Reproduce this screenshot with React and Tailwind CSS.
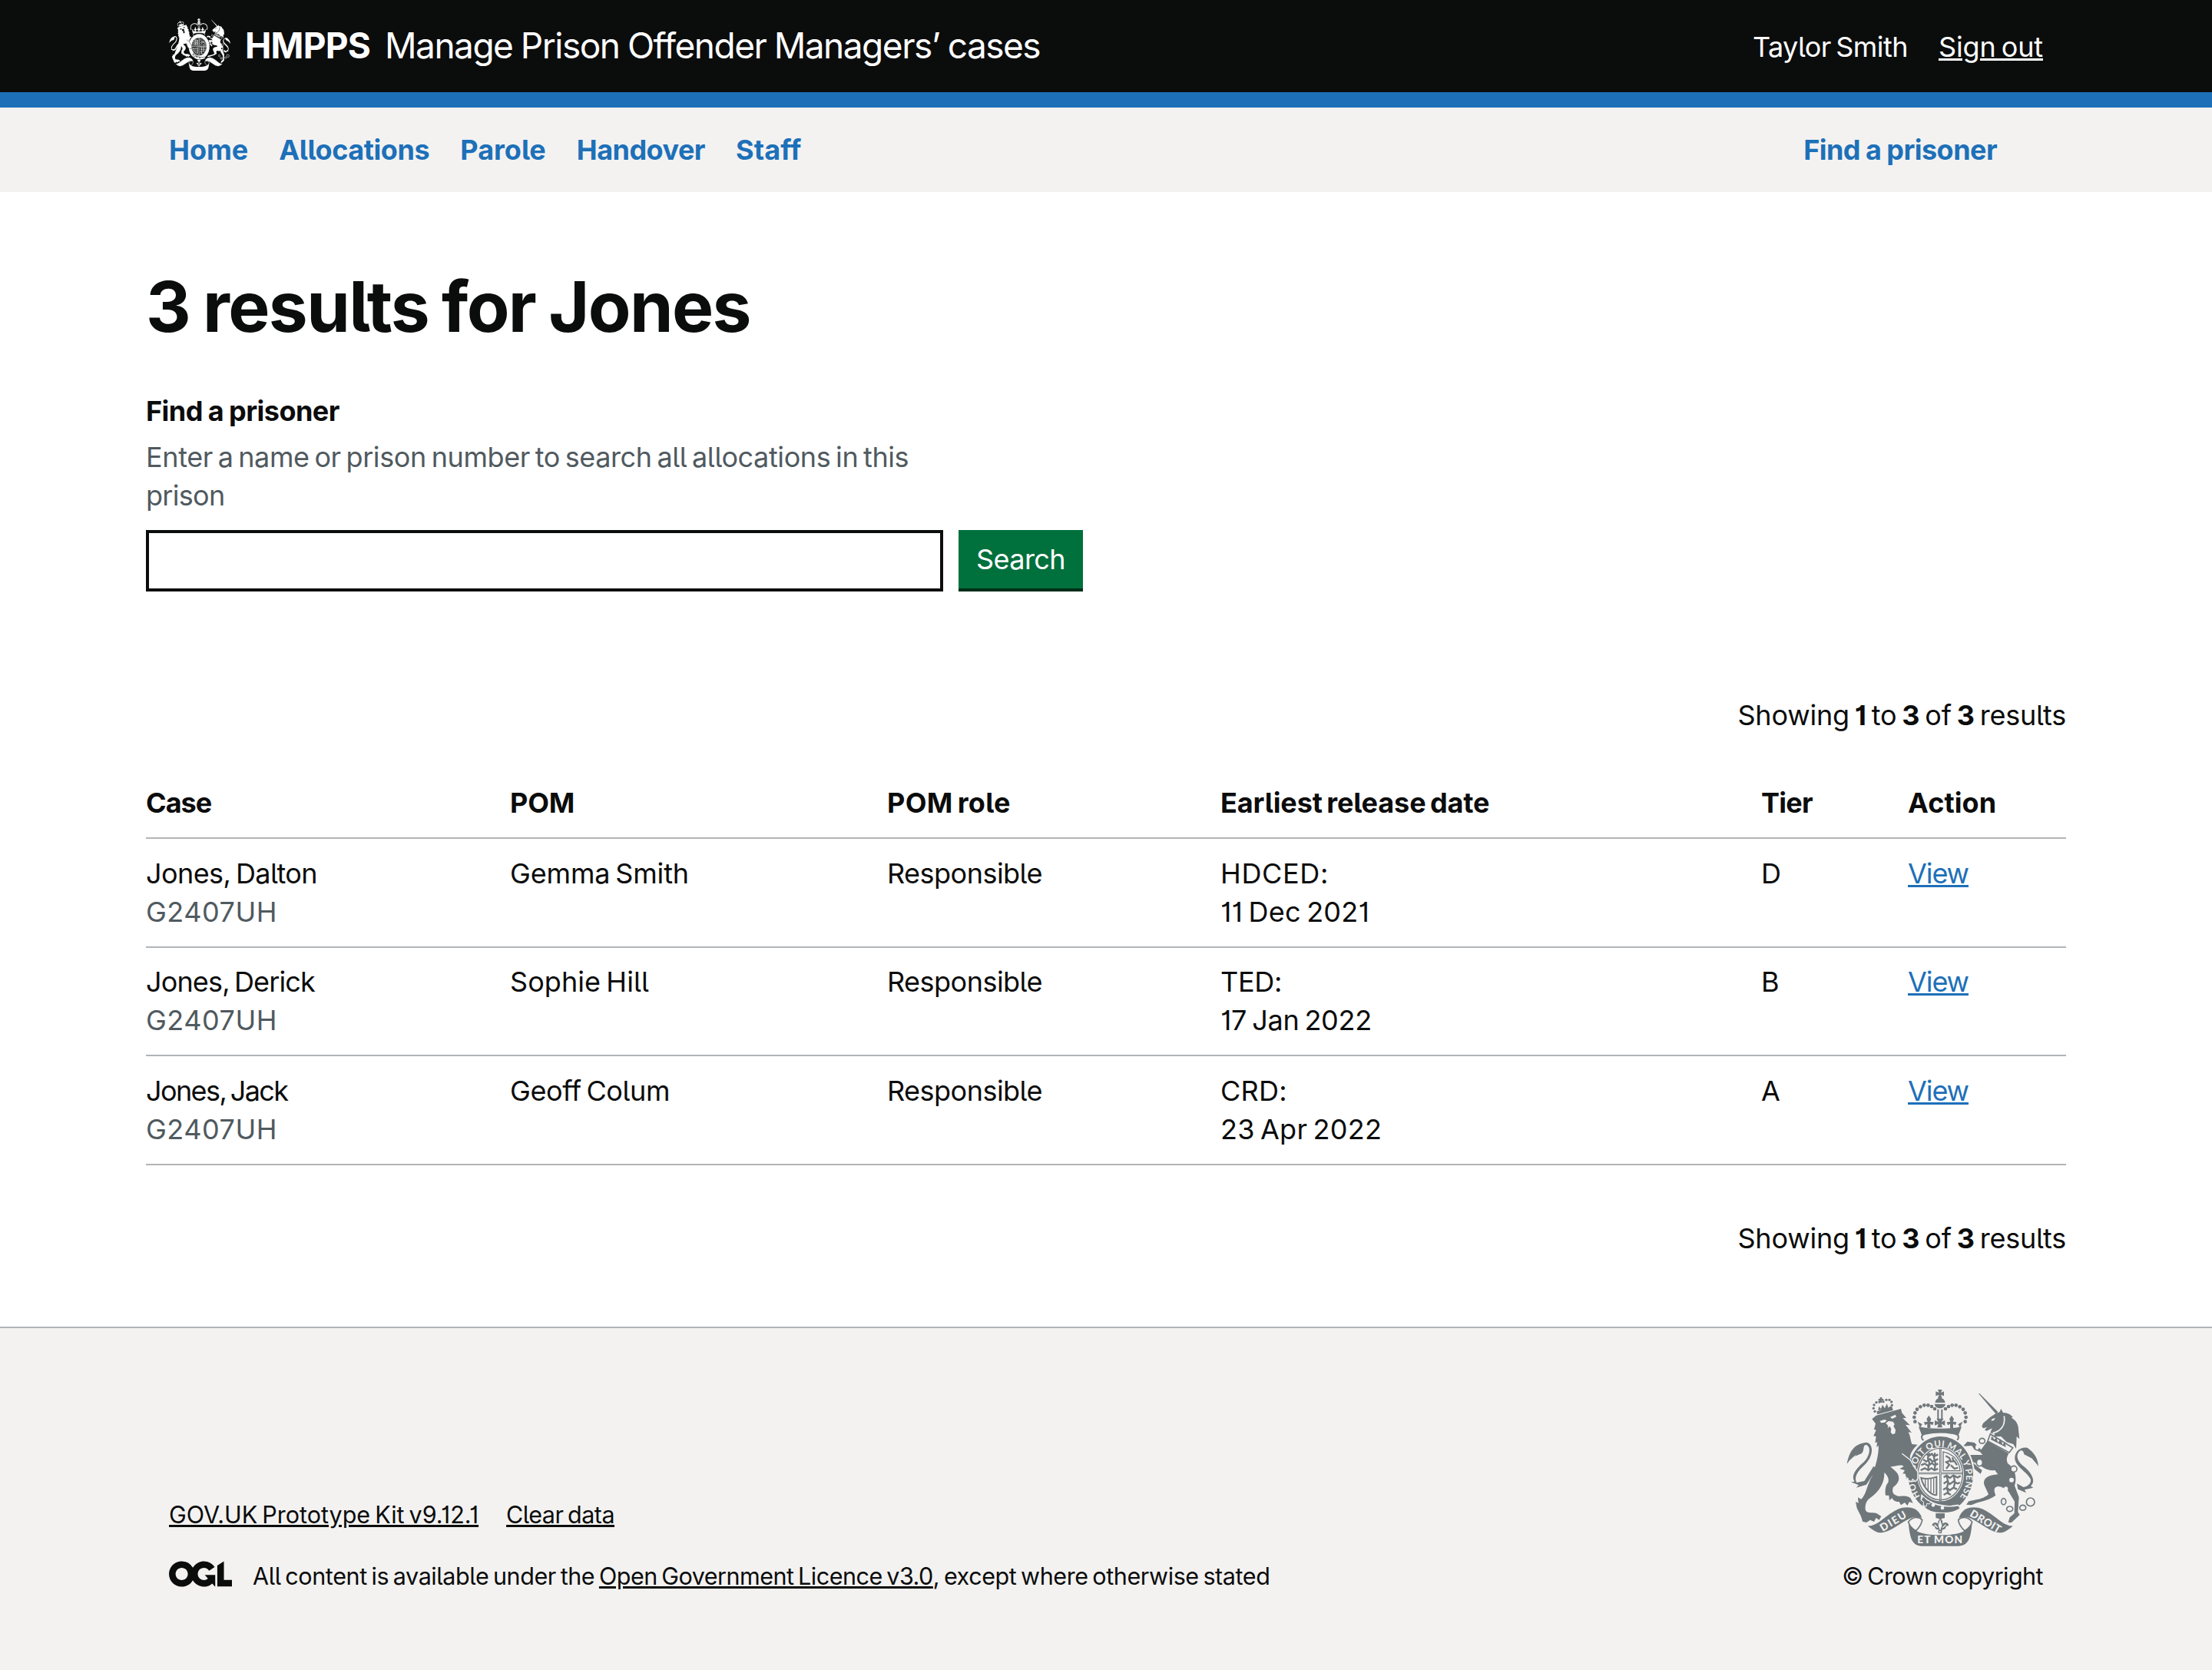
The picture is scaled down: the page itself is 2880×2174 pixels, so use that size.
import React from "react";

const crownDots = [
  [340, 182], [337, 165], [340, 148], [348, 134], [361, 124], [376, 118], [391, 118], [405, 123], [417, 132],
  [536, 182], [539, 165], [536, 148], [528, 134], [515, 124], [500, 118], [485, 118], [471, 123], [459, 132],
];
const lionDots = [[183, 142], [178, 130], [180, 117], [189, 107], [201, 105], [216, 104], [228, 97], [240, 97], [248, 105], [250, 118], [247, 128]];

function RoyalArms({ className, ink, paper, motto }) {
  return (
    <svg className={className} viewBox="72 57 750 612" preserveAspectRatio="none" fill={ink} aria-hidden="true">
      {/* lion */}
      {lionDots.map(([x, y]) => <circle key={x + "-" + y} cx={x} cy={y} r="5" />)}
      <path d="M203 87h8v6h6v7h-6v8h-8v-8h-6v-7h6zM190 142l60-15 5 10-62 17zM196 138l3-16 8 10 6-16 9 14 8-18 6 16 8-8 1 12z" />
      <path d="M172 172L188 158 285 132 289 148 306 168 292 168 320 196 303 194 327 226 314 222C322 238 322 255 328 270L350 272C335 285 324 300 320 320 338 340 350 365 345 395L342 412 330 404 325 415 316 400 305 405 308 386 292 385 300 372 280 366 296 357C285 346 262 358 244 358L264 376C285 395 280 422 255 438 250 452 252 462 262 468 280 480 300 465 322 480L332 500 318 495 310 510 300 498 285 508 278 495C262 495 255 490 250 480L240 490 238 470 225 470C222 450 225 430 235 420 240 405 232 392 220 380 222 420 200 455 165 480 150 490 145 505 146 525 150 542 170 535 190 540L208 552 200 566 188 558 180 573 165 566 150 576 135 572C130 545 115 530 112 515L108 495 119 500 117 478 130 485C150 465 152 430 172 395 187 350 197 320 198 275L190 283 192 262 184 265 188 240 178 238 188 215 180 212 186 190Z" />
      <path fill={paper} d="M202 180l18-6 10 3-8 8-14 2zM243 164l20-9 4 8-16 8zM226 188l10-8 18 2 6 10-4 8 8 14-2 14-9 4-8-8 2-14-6-10-8 8 2-10z" />
      <path d="M74 347C84 296 104 268 150 263 180 268 178 316 146 348 118 374 100 396 112 420L142 414 178 356 190 366 150 428 110 440 120 430 90 418 104 416C88 392 112 364 140 340 164 316 170 278 148 272 134 276 144 292 132 306L104 318 112 308 84 334Z" />
      {/* unicorn */}
      <path d="M588 72l4 0 72 72-8 8z" />
      <path d="M601 200L606 188 634 164 656 150 670 145 676 132 684 147C704 148 715 155 722 165L716 167C735 175 745 195 744 214L748 250 737 240 735 288 724 270 698 262 676 240 648 240 652 230 634 226 641 208 620 218 612 214 622 204 606 208Z" />
      <path d="M688 160C694 195 676 220 644 226" stroke={paper} strokeWidth="5" fill="none" />
      <path fill={paper} d="M640 172l14-4-6 9-10 2z" />
      <path d="M634 230L722 284 708 303 624 258Z" fill={paper} stroke={ink} strokeWidth="5" />
      <path d="M636 252l4-14 10 14 8-8 6 20 10-14 8 22 9-12 4 22z" />
      <path d="M622 258L706 306C698 322 696 330 702 345 735 368 738 405 729 432L746 478 742 535 749 546 734 560 716 577 704 575 710 556 728 540 729 494 706 456C690 440 668 430 657 437 646 443 650 455 655 470 620 495 590 492 560 508L540 506 550 493 572 488C600 485 618 475 627 466L610 428C604 402 628 390 664 388L652 372C625 375 605 362 588 348L562 338 584 358 602 372 596 386 574 368 546 340 552 312 604 312 594 300 572 292 562 276 528 278 544 260 572 264 598 292Z" />
      <path d="M822 357C820 320 800 300 780 285 752 278 728 300 730 328 734 360 780 380 792 408 794 425 780 434 764 438L738 424 742 446 774 460 768 448 802 440 792 434C816 412 790 376 764 356 738 336 732 310 750 296 758 292 764 296 766 310L798 326 790 318 816 348Z" />
      <g fill="none" stroke={ink} strokeWidth="5">
        <ellipse cx="602" cy="257" rx="11" ry="10" fill={paper} />
        <ellipse cx="592" cy="342" rx="12" ry="14" fill={paper} />
        <ellipse cx="726" cy="367" rx="12" ry="12" fill={paper} />
        <ellipse cx="686" cy="494" rx="9" ry="12" />
        <ellipse cx="710" cy="523" rx="12" ry="10" />
        <ellipse cx="761" cy="518" rx="12" ry="10" />
        <circle cx="791" cy="496" r="16" />
      </g>
      <g fill={paper}>
        <ellipse cx="717" cy="410" rx="9" ry="9" />
        <ellipse cx="695" cy="446" rx="8" ry="10" />
        <ellipse cx="583" cy="282" rx="7" ry="9" />
      </g>
      {/* imperial crown */}
      {crownDots.map(([x, y]) => <circle key={x + "-" + y} cx={x} cy={y} r="7" />)}
      <path d="M429 57h17l-5 12 12-5v18l-12-5 5 13h-17l5-13-13 5V64l13 5zM419 108a19 19 0 0 1 38 0zM416 113h43c-4 22-39 22-43 0z" />
      <path d="M430 134v38M445 134v38" stroke={ink} strokeWidth="6" />
      <path d="M424 170h28l-9 13 14-6v20l-14-6 4 14h-20l4-14-14 6v-20l14 6z" />
      <path d="M394 158l9 14-4 10 14 2-4 12-9-5v16h-12v-16l-9 5-4-12 14-2-4-10zM483 158l9 14-4 10 14 2-4 12-9-5v16h-12v-16l-9 5-4-12 14-2-4-10zM350 182l18 10-8 14zM526 182l-18 10 8 14z" />
      <path d="M354 202C400 212 476 212 522 202L510 234C470 220 404 220 366 234Z" />
      <path d="M374 256C362 248 364 232 378 230 416 222 460 222 498 230 512 232 514 248 502 256" fill="none" stroke={ink} strokeWidth="6" />
      {/* garter and shield */}
      <ellipse cx="440" cy="388" rx="133" ry="154" fill={paper} />
      <ellipse cx="440" cy="388" rx="127" ry="148" />
      <ellipse cx="439" cy="387" rx="92" ry="106" fill={paper} />
      <ellipse cx="439" cy="387" rx="87" ry="101" fill="none" stroke={ink} strokeWidth="4" />
      <path d="M439 284v208M350 384h178" stroke={ink} strokeWidth="8" />
      <path d="M439 288v200M354 384h170" stroke={paper} strokeWidth="2" />
      <g fill="none" stroke={ink} strokeWidth="7">
        <path d="M384 308l10 8 12-8 8 10 16-8M372 330l12 8 14-10 10 10 22-10M364 352l14-6 12 8 16-10 10 8 14-6M362 372l16-8 14 8 12-8 12 8 14-6M396 304l-6 20 6 20-6 28M418 304l-4 20 6 22-4 26" />
        <path d="M452 400l12-8 12 10 14-10 16 8 12-6M452 424l12-8 12 10 14-10 16 8 10-4M450 448l14-8 12 10 14-10 14 6M452 468l14-8 14 8M464 396l6 24-6 22 8 24M492 396l4 24-6 24" />
        <path d="M450 300v74h66c-2-34-24-66-66-74z" strokeWidth="4" />
        <path d="M460 316l14 8 6 14 14-2 10 16M462 366l12-16-12-10 16-6M480 352l14 14 14-4M486 322l4 14" />
        <path d="M364 402c20 6 38 4 60-4v70c-18 4-50-24-60-66z" strokeWidth="6" />
        <path d="M380 408v28M391 408v42M402 406v52M413 404v58" strokeWidth="4" />
      </g>
      {motto && (
        <>
          <path id="garter-motto" d="M360 474A101 119 0 1 1 506 488" fill="none" />
          <text fill={paper} fontSize="35" className="font-['Lato'] font-bold">
            <textPath href="#garter-motto" textLength="508" lengthAdjust="spacing">HONI SOIT QUI MAL Y PENSE</textPath>
          </text>
        </>
      )}
      <path d="M366 470C400 505 455 520 508 508L518 520C490 545 400 550 372 512L384 500 364 488Z" stroke={paper} strokeWidth="5" />
      <path d="M372 474c10 12 18 18 30 20l-6 10-10-2-2 12-12-6 2-12-10-8z" stroke={paper} strokeWidth="3" />
      <circle cx="411" cy="508" r="7" fill={paper} />
      <circle cx="447" cy="519" r="7" fill={paper} />
      {/* lion's forepaw over the garter */}
      <path d="M306 290L322 326 332 356 348 376 350 398 342 414 332 404 326 416 316 404 304 396 296 340Z" />
      <path d="M289 307L322 332 336 358 351 378 351 404 342 416 331 407 325 418" stroke={paper} strokeWidth="4" fill="none" />
      {/* pendant fleur-de-lis */}
      <path d="M421 540h35v18l-14 4c6 8 8 14 4 22 6-12 22-10 26 2-4 6-8 2-12 6 2 6-4 12-14 12l-2 14h-10l-2-14c-10 0-16-6-14-12-4-4-8 0-12-6 4-12 20-14 26-2-4-8-2-14 4-22l-15-4z" />
      <path d="M438 570l5 18-5 14-5-14zM416 584l12 12M460 584l-12 12" fill={paper} stroke={paper} strokeWidth="4" />
      <circle cx="437" cy="612" r="5" fill={paper} stroke={ink} strokeWidth="4" />
      {/* motto scroll */}
      <path d="M150 588C200 592 230 530 290 516 330 510 356 520 370 560L340 556C300 560 250 620 200 618 180 614 165 600 150 588Z" stroke={paper} strokeWidth="4" />
      <path d="M728 588C678 592 648 530 588 516 548 510 522 520 508 560L538 556C578 560 628 620 678 618 698 614 713 600 728 588Z" stroke={paper} strokeWidth="4" />
      <path d="M314 572C320 640 328 668 372 668H502C550 668 558 640 563 572 548 610 520 624 438 625 358 624 330 608 314 572Z" />
      <g fill={paper} stroke={ink} strokeWidth="5">
        <path d="M314 574C330 552 356 552 368 566 366 584 352 600 344 608 326 600 318 588 314 574Z" />
        <path d="M563 574C547 552 521 552 509 566 511 584 525 600 533 608 551 600 559 588 563 574Z" />
      </g>
      {motto && (
        <g fill={paper} className="font-['Lato'] font-black" fontSize="41">
          <text x="349" y="658" textLength="176" lengthAdjust="spacing">ET MON</text>
          <text transform="translate(214 612) rotate(-31)" textLength="112" lengthAdjust="spacing">DIEU</text>
          <text transform="translate(551 549) rotate(31)" textLength="134" lengthAdjust="spacing">DROIT</text>
        </g>
      )}
    </svg>
  );
}

function Ogl() {
  return (
    <svg className="h-[34px] w-[82px] shrink-0" viewBox="0 0 483.2 195.7" fill="#0b0c0c" role="img" aria-label="OGL">
      <path d="M421.5 142.8V.1l-50.7 32.3v161.1h112.4v-50.7zm-122.3-9.6A47.12 47.12 0 0 1 221 97.8c0-26 21.1-47.1 47.1-47.1 16.7 0 31.4 8.7 39.7 21.8l42.7-27.2A97.63 97.63 0 0 0 268.1 0c-36.5 0-68.3 20.1-85.1 49.7A98 98 0 0 0 97.8 0C43.9 0 0 43.9 0 97.8s43.9 97.8 97.8 97.8c36.5 0 68.3-20.1 85.1-49.7a97.76 97.76 0 0 0 149.6 25.4l19.4 22.2h3v-87.8h-80l24.3 27.5zM97.8 145c-26 0-47.1-21.1-47.1-47.1s21.1-47.1 47.1-47.1 47.1 21.1 47.1 47.1S123.8 145 97.8 145" />
    </svg>
  );
}

const rows = [
  { name: ["Jones, Dalton", "tracking-[-0.57px]"], pom: ["Gemma Smith", "tracking-[-0.16px]"], kind: ["HDCED:", "tracking-[0.66px]"], date: ["11 Dec 2021", "tracking-[0.24px]"], tier: "D", box: "h-[142px] pt-5" },
  { name: ["Jones, Derick", "tracking-[-0.85px]"], pom: ["Sophie Hill", "tracking-[0.07px]"], kind: ["TED:", "tracking-[-0.31px]"], date: ["17 Jan 2022", "tracking-[-0.23px]"], tier: "B", box: "h-[141px] pt-[19px]" },
  { name: ["Jones, Jack", "tracking-[-1.6px]"], pom: ["Geoff Colum", "tracking-[-0.4px]"], kind: ["CRD:", "tracking-[0.29px]"], date: ["23 Apr 2022", "tracking-[0.24px]"], tier: "A", box: "h-[142px] pt-5" },
];
const grid = "grid grid-cols-[474px_491px_434px_704px_191px_206px]";

function Showing() {
  return <p className="text-right tracking-[-0.2px]">Showing <b>1</b> to <b>3</b> of <b>3</b> results</p>;
}

function Cell({ value }) {
  return <span className={`block ${value[1]}`}>{value[0]}</span>;
}

export default function App() {
  return (
    <div className="h-[2174px] overflow-hidden bg-white font-['Inter',sans-serif] text-[36px] leading-[50px] text-[#0b0c0c] [font-feature-settings:'cv05','cv01'] [word-spacing:-3px]">
      <header className="flex h-[140px] items-start border-b-[20px] border-[#1d70b8] bg-[#0b0c0c] px-[220px] text-white">
        <RoyalArms className="mt-6 h-[68px] w-[80px]" ink="#ffffff" paper="#0b0c0c" />
        <p className="ml-[19px] mt-[29px] text-[46px] font-bold leading-[60px] tracking-[-0.79px]">HMPPS</p>
        <p className="ml-[19px] mt-[29px] text-[46px] leading-[60px] tracking-[-1.5px] [word-spacing:-1px]">Manage Prison Offender Managers’ cases</p>
        <div className="ml-auto mt-9 flex gap-10">
          <span className="tracking-[-0.56px]">Taylor Smith</span>
          <a className="tracking-[-0.11px] underline">Sign out</a>
        </div>
      </header>
      <nav className="flex h-[110px] items-center gap-10 bg-[#f3f2f1] pl-[220px] pr-[280px] font-bold text-[#1d70b8]">
        <a>Home</a>
        <a className="tracking-[-0.41px]">Allocations</a>
        <a>Parole</a>
        <a className="tracking-[-0.52px]">Handover</a>
        <a className="tracking-[0.1px]">Staff</a>
        <a className="ml-auto tracking-[-0.55px] [word-spacing:-1px]">Find a prisoner</a>
      </nav>
      <main className="px-[190px]">
        <h1 className="mt-[99px] text-[91px] font-bold leading-[100px] tracking-[-1.63px] [word-spacing:-3px]">3 results for Jones</h1>
        <label htmlFor="q" className="mt-[61px] block font-bold tracking-[-0.55px] [word-spacing:-1px]">Find a prisoner</label>
        <p className="mt-[10px] text-[#505a5f] tracking-[-0.39px]">Enter a name or prison number to search all allocations in this<br /><span className="tracking-[-0.7px]">prison</span></p>
        <div className="mt-5 flex gap-5">
          <input id="q" className="h-20 w-[1038px] border-4 border-[#0b0c0c]" />
          <button className="h-[76px] w-[162px] bg-[#00703c] tracking-[-0.58px] text-white shadow-[0_4px_0_#002d18]">Search</button>
        </div>
        <div className="mt-[136px]"><Showing /></div>
        <div className={`${grid} mt-16 border-b-2 border-[#b1b4b6] pb-5 font-bold`}>
          <span className="tracking-[-1px]">Case</span>
          <span className="tracking-[-0.2px]">POM</span>
          <span className="tracking-[0.39px]">POM role</span>
          <span className="tracking-[-0.1px]">Earliest release date</span>
          <span className="tracking-[-0.72px]">Tier</span>
          <span className="tracking-[0.1px]">Action</span>
        </div>
        {rows.map((r) => (
          <div key={r.tier} className={`${grid} ${r.box} border-b-2 border-[#b1b4b6]`}>
            <div><Cell value={r.name} /><span className="tracking-[0.51px] text-[#505a5f]">G2407UH</span></div>
            <Cell value={r.pom} />
            <span className="tracking-[-0.52px]">Responsible</span>
            <div><Cell value={r.kind} /><Cell value={r.date} /></div>
            <span>{r.tier}</span>
            <div><a className="tracking-[-1.09px] text-[#1d70b8] underline">View</a></div>
          </div>
        ))}
        <div className="mt-[70px]"><Showing /></div>
      </main>
      <footer className="mt-[90px] flex h-[447px] items-start justify-between border-t-2 border-[#b1b4b6] bg-[#f3f2f1] px-[220px] text-[30.5px] leading-[40px] [word-spacing:-2.5px]">
        <div className="mt-[223px]">
          <div className="flex gap-9">
            <a className="underline">GOV.UK Prototype Kit v9.12.1</a>
            <a className="tracking-[-0.51px] underline">Clear data</a>
          </div>
          <div className="mt-10 flex">
            <Ogl />
            <p className="ml-[27px] tracking-[-0.4px]">All content is available under the <a className="tracking-[-0.5px] underline">Open Government Licence v3.0</a>, except where otherwise stated</p>
          </div>
        </div>
        <div className="mt-20 flex flex-col items-end">
          <RoyalArms className="mr-1.5 h-[204px] w-[250px]" ink="#6f777b" paper="#f3f2f1" motto />
          <p className="mt-[19px] tracking-[-0.55px]">© Crown copyright</p>
        </div>
      </footer>
    </div>
  );
}
